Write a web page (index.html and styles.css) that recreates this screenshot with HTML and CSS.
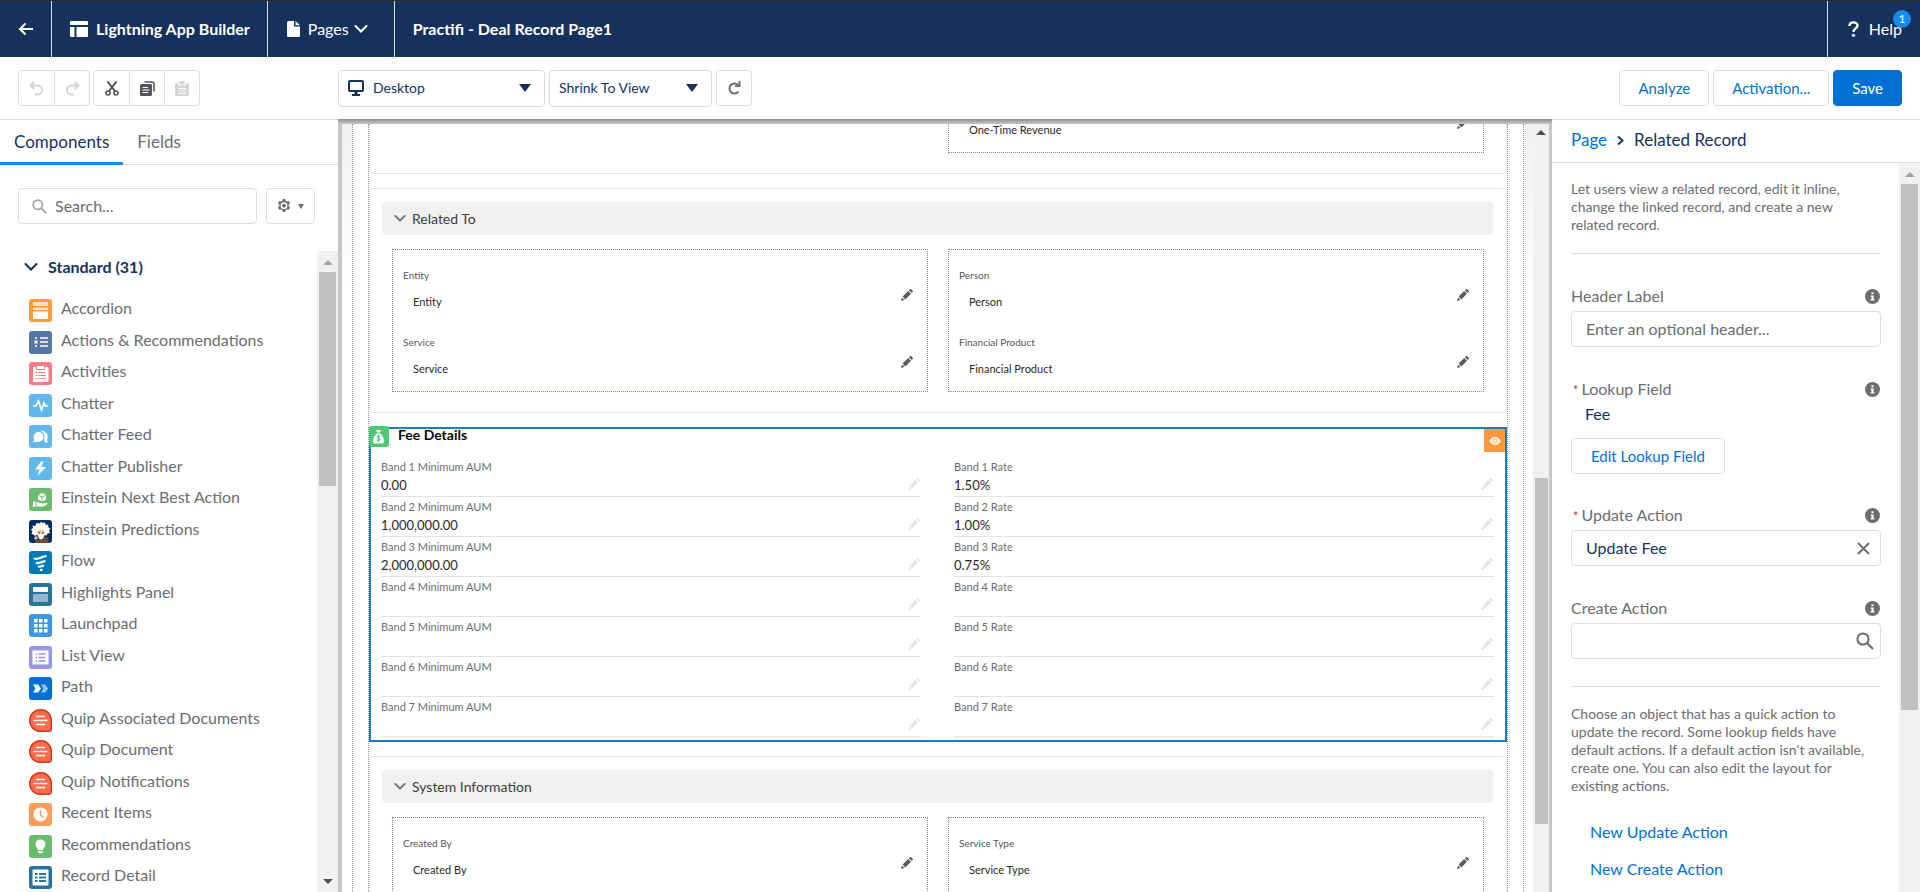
FILE: index.html
```html
<!DOCTYPE html>
<html lang="en">
<head>
  <meta charset="UTF-8">
  <title>Lightning App Builder</title>
  <meta name="viewport" content="width=device-width, initial-scale=1.0">
  <link rel="stylesheet" href="styles.css">
</head>
<body>
  <svg class="defs" aria-hidden="true">
    <symbol id="pencil" viewBox="0 0 12 12">
      <path d="M0 12l1-3.6L3.6 11zM1.6 7.6l5.6-5.6 2.8 2.8-5.6 5.6zM7.9 1.3L9 .3c.4-.4.9-.4 1.2 0l1.5 1.5c.4.4.4.8 0 1.2l-1 1.1z"/>
    </symbol>
    <symbol id="chevron" viewBox="0 0 14 8">
      <path d="M1.5 1L7 6.5 12.500 1" fill="none" stroke="currentColor" stroke-width="2" stroke-linecap="round"/>
    </symbol>
    <symbol id="search" viewBox="0 0 18 18">
      <circle cx="7" cy="7" r="5.600" fill="none" stroke="currentColor" stroke-width="2"/>
      <path d="M11 11l6 6" stroke="currentColor" stroke-width="2.200"/>
    </symbol>
    <symbol id="info" viewBox="0 0 14 14">
      <circle cx="7" cy="7" r="7"/>
      <path fill="#fff" d="M6 3h2v1.800H6zM5.300 6H8v3.500h.8v1.200H5.200V9.500H6V7.200h-.7z"/>
    </symbol>
    <symbol id="quip" viewBox="0 0 23 23">
      <path d="M11.500.7h.5A10.400 10.400 0 0 1 22.300 11v11.300H11.500a10.800 10.800 0 0 1 0-21.600z" fill="#ff6d4d" stroke="#c73e1f" stroke-width="1.400"/>
      <path d="M7 7.500h9M4.500 11.500h14M7 15.500h9" stroke="#fff" stroke-width="1.400"/>
    </symbol>
  </svg>

  <header class="navbar">
    <a class="nav-item nav-back" href="#" aria-label="Back">
      <svg width="16" height="14" viewBox="0 0 16 14"><path d="M7.500 1.500L2 7l5.500 5.500M2 7h13" fill="none" stroke="#fff" stroke-width="2"/></svg>
    </a>
    <div class="nav-item nav-app">
      <svg width="18" height="16" viewBox="0 0 18 16"><path fill="#fff" d="M1 0h16q1 0 1 1v3H0V1q0-1 1-1zM0 6h4.500v10H1q-1 0-1-1zM6.500 6H18v9q0 1-1 1H6.500z"/></svg>
      <span>Lightning App Builder</span>
    </div>
    <button class="nav-item nav-pages" type="button">
      <svg width="13" height="16" viewBox="0 0 13 16"><path fill="#fff" d="M1.500 0H7v5.500h6v9q0 1.500-1.500 1.500h-10Q0 16 0 14.500v-13Q0 0 1.500 0zM8.500 0L13 4.300H8.500z"/></svg>
      <span>Pages</span>
      <svg class="nav-chevron" width="14" height="8"><use href="#chevron"/></svg>
    </button>
    <h1 class="nav-title">Practifi - Deal Record Page1</h1>
    <button class="nav-item nav-help" type="button">
      <svg width="11" height="16" viewBox="0 0 11 16"><path d="M1.500 5c0-5 8-4.500 8-.5 0 3-4 2.800-4 6.500" fill="none" stroke="#fff" stroke-width="2.400"/><circle cx="5.500" cy="14.300" r="1.600" fill="#fff"/></svg>
      <span>Help</span>
      <span class="help-badge">1</span>
    </button>
  </header>

  <div class="toolbar">
    <div class="toolbar-left">
      <div class="button-group">
        <button type="button" aria-label="Undo" disabled><svg width="15" height="15" viewBox="0 0 15 15"><path d="M5 1L1.500 4.500 5 8M2 4.500h6.500a4.500 4.500 0 0 1 0 9H6" fill="none" stroke="currentColor" stroke-width="2"/></svg></button>
        <button type="button" aria-label="Redo" disabled><svg width="15" height="15" viewBox="0 0 15 15"><path d="M10 1l3.500 3.500L10 8M13 4.500H6.500a4.500 4.500 0 0 0 0 9H9" fill="none" stroke="currentColor" stroke-width="2"/></svg></button>
      </div>
      <div class="button-group">
        <button type="button" aria-label="Cut"><svg width="14" height="15" viewBox="0 0 14 15"><path d="M2.500.5L10 10M11.500.5L4 10" stroke="currentColor" stroke-width="2"/><circle cx="3" cy="12" r="2" fill="none" stroke="currentColor" stroke-width="1.600"/><circle cx="11" cy="12" r="2" fill="none" stroke="currentColor" stroke-width="1.600"/></svg></button>
        <button type="button" aria-label="Copy"><svg width="15" height="15" viewBox="0 0 15 15"><path d="M4.500 1h8Q14 1 14 2.500v8" fill="none" stroke="currentColor" stroke-width="1.600"/><rect y="3" width="12" height="12" rx="1.500" fill="currentColor"/><path d="M2.500 6.500H8M2.500 9h7M2.500 11.500H8" stroke="#fff"/></svg></button>
        <button type="button" aria-label="Paste" disabled><svg width="14" height="15" viewBox="0 0 14 15"><path fill="currentColor" d="M1 2h2v2.500h8V2h2q1 0 1 1v11q0 1-1 1H1q-1 0-1-1V3q0-1 1-1zM4.500 0h5v3.500h-5z"/><path d="M3 7.500h8M3 10h8M3 12.500h8" stroke="#fff"/></svg></button>
      </div>
    </div>
    <div class="toolbar-view">
      <div class="select select-device">
        <svg width="16" height="16" viewBox="0 0 16 16"><rect x="1" y="1" width="14" height="10" rx="1" fill="none" stroke="#16325c" stroke-width="2"/><path fill="#16325c" d="M6.500 12h3v2H12v2H4v-2h2.500z"/></svg>
        <select aria-label="Form factor"><option>Desktop</option></select>
      </div>
      <div class="select select-zoom">
        <select aria-label="Zoom"><option>Shrink To View</option></select>
      </div>
      <button class="button button-icon" type="button" aria-label="Refresh"><svg width="15" height="14" viewBox="0 0 15 14"><path d="M11.500 4.500A5 5 0 1 0 11.500 10.500" fill="none" stroke="currentColor" stroke-width="2"/><path fill="currentColor" d="M13.500 0v6H8V4.300h3.500V0z"/></svg></button>
    </div>
    <div class="toolbar-actions">
      <button class="button" type="button">Analyze</button>
      <button class="button" type="button">Activation...</button>
      <button class="button button-brand" type="button">Save</button>
    </div>
  </div>

  <main class="builder">
    <aside class="palette">
      <nav class="tabs">
        <a class="active" href="#">Components</a>
        <a href="#">Fields</a>
      </nav>
      <div class="palette-search">
        <div class="search-box">
          <svg width="15" height="15"><use href="#search" width="15" height="15"/></svg>
          <input type="search" placeholder="Search..." aria-label="Search components">
        </div>
        <button class="button button-gear" type="button" aria-label="Settings">
          <svg width="14" height="14" viewBox="0 0 14 14"><path fill="currentColor" fill-rule="evenodd" d="M5.700 0h2.600l.4 1.900 1.300.7 1.800-.7 1.300 2.300-1.400 1.400v1.600l1.400 1.300-1.300 2.300-1.800-.6-1.300.8-.4 2H5.700l-.4-2-1.300-.8-1.800.6L.9 8.500l1.400-1.300V5.600L.9 4.200l1.300-2.300 1.800.7 1.300-.7zM7 3.300a3.400 3.400 0 1 0 0 6.800 3.400 3.400 0 0 0 0-6.800z"/><circle cx="7" cy="6.700" r="1.900" fill="currentColor"/></svg>
          <span class="caret"></span>
        </button>
      </div>
      <div class="palette-body">
        <div class="palette-list">
          <h2><svg width="14" height="8"><use href="#chevron"/></svg>Standard (31)</h2>
          <ul>
            <li><svg class="tile orange" viewBox="0 0 23 23"><path fill="#ffdcba" d="M4 3h15v4H4zM4 8.500h15v2.500H4z"/><path fill="#fff" d="M4 12.500h15V20H4z"/></svg>Accordion</li>
            <li><svg class="tile slate" viewBox="0 0 23 23"><path d="M11 7h8M11 11h8M11 15h8M7 6v2M7 14v2" stroke="#fff" stroke-width="1.600"/><circle cx="7" cy="11" r="1.800" fill="#fff"/></svg>Actions &amp; Recommendations</li>
            <li><svg class="tile pink" viewBox="0 0 23 23"><path fill="#fff" d="M8 4h7v3H8zM5 5h2v3h9V5h2q1.500 0 1.500 1.500v12Q19.500 20 18 20H5.500Q4 20 4 18.500v-12Q4 5 5 5z"/><path d="M6.500 10.500h2M9.500 10.500h7M6.500 13.500h2M9.500 13.500h7M6.500 16.500h2M9.500 16.500h7" stroke="#f67c8c" stroke-width="1.200"/></svg>Activities</li>
            <li><svg class="tile sky" viewBox="0 0 23 23"><path d="M4 12h3l2.500-5 3 9 2.500-7 1.500 3H19" fill="none" stroke="#fff" stroke-width="1.700"/></svg>Chatter</li>
            <li><svg class="tile sky" viewBox="0 0 23 23"><path fill="#fff" d="M12 5.500a6.500 6.500 0 0 1 6 9.500l.8 3-3-.8z"/><circle cx="9.700" cy="12" r="6" fill="#62b7ed"/><circle cx="9.500" cy="12" r="5" fill="#fff"/><path fill="#fff" d="M4.300 17.500l1-4 3 3z"/></svg>Chatter Feed</li>
            <li><svg class="tile sky" viewBox="0 0 23 23"><path fill="#fff" d="M12.500 4L6 12.500h4.500L8.500 19 17 10h-5l2.500-5z"/></svg>Chatter Publisher</li>
            <li><svg class="tile green" viewBox="0 0 23 23"><path fill="#fff" d="M13 5l4 2v4.500l-4 2-4-2V7zM4 13.500h2.500V19H4zM7.500 14l6 1.500 4.500-.5c1 1-1.500 3-5 3.500H7.500z"/><path d="M9.500 7.500L13 9l3.500-1.500M13 9v4" stroke="#6bbd6e" fill="none"/></svg>Einstein Next Best Action</li>
            <li><svg class="tile navy" viewBox="0 0 23 23"><path fill="#6b4a3a" d="M9 23q0-5 4-6 5-1 6.500 2v4z"/><path fill="#fff" d="M9.500 3l1.500.5 1-2 1.500 1.500 2.500-.5.5 2 3 .5-.5 2 2.500 1.500-1.500 2 1 2.500-2.500.5-1 2-2.500-.5H7.500L6 16l-1.500-1.500L2.500 14l1-2.500L2 9.500l2-1.500L3.500 5.500l3 .5.5-2.500z"/><path fill="#f6c9a0" d="M8 11q4-2.500 8 0l-.5 4-3.500 3.500L8.500 15z"/><path fill="#fff" d="M8.500 15q3.500-2 7 0-1 4-3.500 4.500-2.500-.5-3.500-4.500z"/><circle cx="10.200" cy="12.800" r=".7" fill="#222"/><circle cx="13.800" cy="12.800" r=".7" fill="#222"/><circle cx="7" cy="18" r="1.700" fill="#f6c9a0"/><path fill="#6b4a3a" d="M6 19.500h2.500l1 3.500H6z"/></svg>Einstein Predictions</li>
            <li><svg class="tile blue" viewBox="0 0 23 23"><path d="M5 7q1.500 1.500 4.500.5t4-1.500 4-1M7 11.500q1.500 1 3.500.3t3-1 3-.6M9 15.200q1 .8 2.500.3t3.500-.8M11 18.800q1 .5 2.500-.3" fill="none" stroke="#fff" stroke-width="2.200"/></svg>Flow</li>
            <li><svg class="tile teal" viewBox="0 0 23 23"><rect x="4" y="4" width="15" height="5" fill="#fff"/><rect x="4" y="11" width="15" height="8" fill="#95b8cf"/></svg>Highlights Panel</li>
            <li><svg class="tile azure" viewBox="0 0 23 23"><path fill="#fff" d="M5 5h3.500v3.500H5zM10 5h3.500v3.500H10zM15 5h3.500v3.500H15zM5 10h3.500v3.500H5zM10 10h3.500v3.500H10zM15 10h3.500v3.500H15zM5 15h3.500v3.500H5zM10 15h3.500v3.500H10zM15 15h3.500v3.500H15z"/></svg>Launchpad</li>
            <li><svg class="tile violet" viewBox="0 0 23 23"><rect x="3.500" y="4.500" width="16" height="14" fill="#fff"/><path d="M6.500 8h1.500M9.500 8h7M6.500 11.500H8M9.500 11.500h7M6.500 15H8M9.500 15h7" stroke="#9895ee" stroke-width="1.400"/></svg>List View</li>
            <li><svg class="tile cobalt" viewBox="0 0 23 23"><path fill="#fff" d="M4 7.500h5l3 4-3 4H4l2.500-4z"/><path fill="#99c6ef" d="M12 7.500h4l3 4-3 4h-4l2.500-4z"/></svg>Path</li>
            <li><svg class="tile"><use href="#quip"/></svg>Quip Associated Documents</li>
            <li><svg class="tile"><use href="#quip"/></svg>Quip Document</li>
            <li><svg class="tile"><use href="#quip"/></svg>Quip Notifications</li>
            <li><svg class="tile peach" viewBox="0 0 23 23"><circle cx="11.500" cy="11.500" r="7" fill="#fff"/><path d="M11.500 7v5l2.500 2.500" fill="none" stroke="#ff9e5a" stroke-width="1.600"/></svg>Recent Items</li>
            <li><svg class="tile green" viewBox="0 0 23 23"><path fill="#fff" d="M11.500 4.500a5 5 0 0 1 5 5c0 2.500-2.200 3.300-2.500 5.500H9c-.3-2.200-2.500-3-2.500-5.500a5 5 0 0 1 5-5zM9 16h5v1q-2.500 3-5 0z"/></svg>Recommendations</li>
            <li><svg class="tile teal" viewBox="0 0 23 23"><rect x="3.500" y="3.500" width="16" height="16" rx="1" fill="#fff"/><path d="M6 8h2.500M10 8h7M6 11.500h2.500M10 11.500h7M6 15h2.500M10 15h7" stroke="#2a739e" stroke-width="2"/></svg>Record Detail</li>
          </ul>
        </div>
        <div class="scrollbar"><i class="up"></i><span class="thumb"></span><i class="down"></i></div>
      </div>
    </aside>

    <section class="canvas">
      <div class="canvas-page">
        <div class="region-outer">
          <div class="region">
            <article class="card card-partial">
              <div class="columns">
                <div class="column">
                  <div class="field"><div class="field-value">One-Time Revenue</div><svg><use href="#pencil"/></svg></div>
                </div>
              </div>
            </article>

            <article class="card">
              <h3 class="section-title"><svg width="12" height="7"><use href="#chevron"/></svg>Related To</h3>
              <div class="columns">
                <div class="column">
                  <div class="field"><div><div class="field-label">Entity</div><div class="field-value">Entity</div></div><svg><use href="#pencil"/></svg></div>
                  <div class="field"><div><div class="field-label">Service</div><div class="field-value">Service</div></div><svg><use href="#pencil"/></svg></div>
                </div>
                <div class="column">
                  <div class="field"><div><div class="field-label">Person</div><div class="field-value">Person</div></div><svg><use href="#pencil"/></svg></div>
                  <div class="field"><div><div class="field-label">Financial Product</div><div class="field-value">Financial Product</div></div><svg><use href="#pencil"/></svg></div>
                </div>
              </div>
            </article>

            <article class="fee">
              <svg class="fee-icon" width="20" height="21" viewBox="0 0 20 21"><rect width="20" height="21" rx="3" fill="#4bca73"/><path fill="#fff" d="M7 4h5l-1 2.500H8zM7.500 7.500h4q3.500 3.500 3.500 7 0 3-2 3H6q-2 0-2-3 0-3.500 3.500-7z"/><path d="M11.300 10.500q-3.500-1-3.500.8t3.500 1.800q0 2-3.600 1M9.500 9v7" fill="none" stroke="#4bca73"/></svg>
              <span class="visibility"><svg width="12" height="8" viewBox="0 0 14 10"><path fill="#fff" d="M0 5q3-5 7-5t7 5q-3 5-7 5T0 5z"/><circle cx="7" cy="5" r="2.600" fill="none" stroke="#ff9a3c" stroke-width="1.200"/></svg></span>
              <h3>Fee Details</h3>
              <dl>
                <div><dt>Band 1 Minimum AUM</dt><dd>0.00</dd><svg><use href="#pencil"/></svg></div>
                <div><dt>Band 1 Rate</dt><dd>1.50%</dd><svg><use href="#pencil"/></svg></div>
                <div><dt>Band 2 Minimum AUM</dt><dd>1,000,000.00</dd><svg><use href="#pencil"/></svg></div>
                <div><dt>Band 2 Rate</dt><dd>1.00%</dd><svg><use href="#pencil"/></svg></div>
                <div><dt>Band 3 Minimum AUM</dt><dd>2,000,000.00</dd><svg><use href="#pencil"/></svg></div>
                <div><dt>Band 3 Rate</dt><dd>0.75%</dd><svg><use href="#pencil"/></svg></div>
                <div><dt>Band 4 Minimum AUM</dt><dd></dd><svg><use href="#pencil"/></svg></div>
                <div><dt>Band 4 Rate</dt><dd></dd><svg><use href="#pencil"/></svg></div>
                <div><dt>Band 5 Minimum AUM</dt><dd></dd><svg><use href="#pencil"/></svg></div>
                <div><dt>Band 5 Rate</dt><dd></dd><svg><use href="#pencil"/></svg></div>
                <div><dt>Band 6 Minimum AUM</dt><dd></dd><svg><use href="#pencil"/></svg></div>
                <div><dt>Band 6 Rate</dt><dd></dd><svg><use href="#pencil"/></svg></div>
                <div><dt>Band 7 Minimum AUM</dt><dd></dd><svg><use href="#pencil"/></svg></div>
                <div><dt>Band 7 Rate</dt><dd></dd><svg><use href="#pencil"/></svg></div>
              </dl>
            </article>

            <article class="card">
              <h3 class="section-title"><svg width="12" height="7"><use href="#chevron"/></svg>System Information</h3>
              <div class="columns">
                <div class="column">
                  <div class="field"><div><div class="field-label">Created By</div><div class="field-value">Created By</div></div><svg><use href="#pencil"/></svg></div>
                </div>
                <div class="column">
                  <div class="field"><div><div class="field-label">Service Type</div><div class="field-value">Service Type</div></div><svg><use href="#pencil"/></svg></div>
                </div>
              </div>
            </article>
          </div>
        </div>
      </div>
      <div class="scrollbar scrollbar-canvas"><i class="up dark"></i><span class="thumb"></span></div>
    </section>

    <aside class="properties">
      <nav class="breadcrumb"><a href="#">Page</a><svg width="7" height="11" viewBox="0 0 7 11"><path d="M1 1.500l4.500 4L1 9.500" fill="none" stroke="#16325c" stroke-width="2"/></svg><span>Related Record</span></nav>
      <div class="properties-body">
        <form class="properties-form">
          <p>Let users view a related record, edit it inline, change the linked record, and create a new related record.</p>
          <hr>
          <div class="form-label"><label for="header-label">Header Label</label><svg><use href="#info"/></svg></div>
          <div class="input"><input id="header-label" type="text" placeholder="Enter an optional header..."></div>
          <div class="form-label"><span><b>*</b>Lookup Field</span><svg><use href="#info"/></svg></div>
          <div class="lookup-value">Fee</div>
          <button class="button button-lookup" type="button">Edit Lookup Field</button>
          <div class="form-label"><label for="update-action"><b>*</b>Update Action</label><svg><use href="#info"/></svg></div>
          <div class="input"><input id="update-action" type="text" value="Update Fee"><svg width="13" height="13" viewBox="0 0 13 13"><path d="M1 1l11 11M12 1L1 12" stroke="currentColor" stroke-width="2"/></svg></div>
          <div class="form-label"><label for="create-action">Create Action</label><svg><use href="#info"/></svg></div>
          <div class="input input-search"><input id="create-action" type="text"><svg width="18" height="18"><use href="#search"/></svg></div>
          <hr>
          <p>Choose an object that has a quick action to update the record. Some lookup fields have default actions. If a default action isn't available, create one. You can also edit the layout for existing actions.</p>
          <div class="form-links">
            <a href="#">New Update Action</a>
            <a href="#">New Create Action</a>
          </div>
        </form>
        <div class="scrollbar scrollbar-properties"><i class="up"></i><span class="thumb"></span></div>
      </div>
    </aside>
  </main>
</body>
</html>
```

FILE: styles.css
```css
* {
  box-sizing: border-box;
}

body {
  margin: 0;
  height: 100vh;
  display: flex;
  flex-direction: column;
  overflow: hidden;
  background: #fff;
  color: #16325c;
  font-family: Lato, "Open Sans", sans-serif;
  font-size: 16px;
  line-height: 20px;
}

h1, h2, h3, p, ul, dl, dd {
  margin: 0;
  padding: 0;
}

button, input, select {
  font: inherit;
  color: inherit;
}

a {
  color: #0070d2;
  text-decoration: none;
}

svg {
  flex: none;
}

.defs {
  position: absolute;
  width: 0;
  height: 0;
}

/* navbar */
.navbar {
  display: flex;
  flex: none;
  height: 57px;
  border-top: 1px solid #2b2826;
  background: #16325c;
  color: #fff;
}

.nav-item {
  display: flex;
  align-items: center;
  border: 0;
  border-right: 1px solid #d8dde6;
  background: none;
  padding: 0 17px 0 18px;
  gap: 8px;
}

.nav-app {
  font-weight: bold;
}

.nav-pages {
  padding: 0 26px 0 19px;
}

.nav-chevron {
  margin-left: -3px;
}

.nav-title {
  flex: 1;
  padding-left: 18px;
  font-size: 16px;
  line-height: 56px;
}

.nav-help {
  position: relative;
  border-right: 0;
  border-left: 1px solid #d8dde6;
  padding: 0 18px 0 20px;
  gap: 10px;
}

.help-badge {
  position: absolute;
  top: 9px;
  right: 9px;
  width: 18px;
  height: 18px;
  border-radius: 50%;
  background: #1589ee;
  font-size: 12px;
  line-height: 18px;
}

/* toolbar */
.toolbar {
  display: grid;
  grid-template-columns: 320px 1fr auto;
  align-items: center;
  flex: none;
  height: 63px;
  padding: 0 18px;
  border-bottom: 1px solid #d8dde6;
}

.toolbar-left, .toolbar-view, .toolbar-actions {
  display: flex;
  gap: 4px;
}

.toolbar-left {
  gap: 3px;
}

.button-group {
  display: flex;
  border: 1px solid #d8dde6;
  border-radius: 4px;
}

.button-group button {
  display: flex;
  align-items: center;
  justify-content: center;
  width: 35px;
  height: 34px;
  border: 0;
  background: none;
  padding: 0;
  color: #54565a;
}

.button-group button + button {
  border-left: 1px solid #d8dde6;
}

.button-group button:disabled {
  color: #d4d4d4;
}

.button {
  height: 36px;
  padding: 0 18px;
  border: 1px solid #d8dde6;
  border-radius: 4px;
  background: #fff;
  font-size: 15px;
  color: #0070d2;
}

.button-brand {
  border-color: #0070d2;
  background: #0070d2;
  color: #fff;
}

.button-icon {
  display: flex;
  align-items: center;
  justify-content: center;
  width: 36px;
  padding: 0;
  color: #6b6d70;
}

.select {
  position: relative;
  display: flex;
  align-items: center;
  height: 37px;
  border: 1px solid #dddbda;
  border-radius: 4px;
}

.select::after {
  content: "";
  position: absolute;
  right: 13px;
  border: 6px solid transparent;
  border-top: 8px solid #16325c;
  border-bottom: 0;
  pointer-events: none;
}

.select select {
  appearance: none;
  width: 100%;
  height: 35px;
  border: 0;
  background: none;
  padding: 0 9px;
  font-size: 14px;
}

.select-device {
  width: 207px;
  padding-left: 9px;
}

.select-zoom {
  width: 163px;
}

/* layout */
.builder {
  display: grid;
  grid-template-columns: 338px 1fr 368px;
  flex: 1;
  min-height: 0;
}

.palette, .properties {
  display: flex;
  flex-direction: column;
  min-height: 0;
}

.tabs {
  display: flex;
  height: 45px;
  border-bottom: 1px solid #d8dde6;
}

.tabs a {
  height: 45px;
  padding: 0 14px;
  font-size: 17px;
  line-height: 44px;
  color: #6b6d70;
}

.tabs .active {
  border-bottom: 3px solid #1589ee;
  color: #16325c;
}

.palette-search {
  display: flex;
  gap: 9px;
  padding: 23px 23px 27px 18px;
}

.search-box {
  display: flex;
  flex: 1;
  align-items: center;
  gap: 8px;
  height: 36px;
  padding-left: 13px;
  border: 1px solid #d8dde6;
  border-radius: 4px;
  color: #a0a2a5;
}

.search-box input {
  width: 100%;
  border: 0;
  padding: 0;
  outline: 0;
}

::placeholder {
  color: #6b6d70;
  opacity: 1;
}

.button-gear {
  display: flex;
  align-items: center;
  gap: 7px;
  width: 49px;
  padding: 0 10px;
  color: #6b6d70;
}

.caret {
  border: 3px solid transparent;
  border-top: 5px solid #6b6d70;
  border-bottom: 0;
}

.palette-body, .properties-body {
  display: flex;
  flex: 1;
  min-height: 0;
}

.palette-list {
  flex: 1;
  overflow: hidden;
}

.palette-list h2 {
  display: flex;
  align-items: center;
  gap: 10px;
  height: 32px;
  margin-bottom: 12px;
  padding-left: 24px;
  font-size: 16px;
}

.palette-list ul {
  list-style: none;
}

.palette-list li {
  display: flex;
  gap: 9px;
  height: 31px;
  padding-left: 29px;
  line-height: 25px;
  color: #6b6d70;
}

.palette-list li:nth-child(odd) {
  height: 32px;
}

.tile {
  width: 23px;
  height: 23px;
  margin-top: 4px;
  border-radius: 3px;
}

.orange { background: #ff9a3c; }
.slate { background: #5876a3; }
.pink { background: #f67c8c; }
.sky { background: #62b7ed; }
.green { background: #6bbd6e; }
.navy { background: #032e61; }
.blue { background: #0079bc; }
.teal { background: #2a739e; }
.azure { background: #3c97dd; }
.violet { background: #9895ee; }
.cobalt { background: #0070d2; }
.peach { background: #ff9e5a; }

/* scrollbars */
.scrollbar {
  display: flex;
  flex-direction: column;
  align-items: center;
  flex: none;
  width: 21px;
  padding-top: 9px;
  background: #f1f1f1;
}

.scrollbar i {
  border: 5px solid transparent;
}

.scrollbar .up {
  border-top: 0;
  border-bottom-color: #a3a3a3;
}

.scrollbar .dark {
  border-bottom-color: #505050;
}

.scrollbar .down {
  margin: auto 0 8px;
  border-bottom: 0;
  border-top-color: #505050;
}

.thumb {
  width: 17px;
  height: 214px;
  margin-top: 7px;
  background: #c1c1c1;
}

.scrollbar-canvas {
  width: 16px;
  padding-top: 6px;
}

.scrollbar-canvas .thumb {
  width: 13px;
  height: 346px;
  margin-top: 343px;
}

.scrollbar-properties .thumb {
  height: 526px;
}

/* canvas */
.canvas {
  display: flex;
  min-width: 0;
  min-height: 0;
  margin-top: -1px;
  padding: 5px 3px 0 4px;
  background: linear-gradient(#8c8e91, #c6c7ca 5px);
}

.canvas-page {
  flex: 1;
  overflow: hidden;
  padding: 0 9px 0 10px;
  background: linear-gradient(#f0f0f0, #fff 170px);
}

.region-outer {
  min-height: 100%;
  padding: 0 15px;
  border: dotted #8a97b0;
  border-width: 0 1px;
  background: #fff;
}

.region {
  display: flex;
  flex-direction: column;
  gap: 14px;
  border: dotted #8a97b0;
  border-width: 0 1px;
}

.card {
  padding: 13px 13px 20px 12px;
  border: 1px solid #e5e5e5;
  border-radius: 4px;
}

.card-partial {
  margin-top: -39px;
}

.card-partial .column {
  grid-column: 2;
}

.section-title {
  display: flex;
  align-items: center;
  gap: 6px;
  height: 33px;
  margin-bottom: 14px;
  padding-left: 12px;
  border-radius: 4px;
  background: #f1f1f1;
  font-size: 14px;
  font-weight: normal;
  color: #3e3e3c;
}

.section-title svg {
  color: #6b6d70;
}

.columns {
  display: grid;
  grid-template-columns: 1fr 1fr;
  gap: 20px;
  margin: 0 9px 0 10px;
}

.column {
  display: flex;
  flex-direction: column;
  gap: 22px;
  padding: 17px 14px 12px 10px;
  border: 1px dotted #7688a8;
}

.field {
  display: flex;
  align-items: flex-end;
  justify-content: space-between;
}

.field svg {
  width: 12px;
  height: 12px;
  margin-bottom: 11px;
  fill: #5c5c5a;
}

.field-label {
  margin-bottom: 9px;
  font-size: 10px;
  line-height: 16px;
  color: #54565a;
}

.field-value {
  padding-left: 10px;
  font-size: 11px;
  color: #2b2826;
}

.fee {
  position: relative;
  padding: 0 11px 3px 10px;
  border: 2px solid #1c7cbd;
}

.fee h3 {
  height: 28px;
  padding-left: 17px;
  font-size: 14px;
  line-height: 12px;
  color: #080707;
}

.fee-icon {
  position: absolute;
  top: -3px;
  left: -2px;
}

.visibility {
  position: absolute;
  top: 0;
  right: 0;
  display: flex;
  align-items: center;
  justify-content: center;
  width: 21px;
  height: 23px;
  background: #ff9a3c;
}

.fee dl {
  display: grid;
  grid-template-columns: 1fr 1fr;
  column-gap: 33px;
}

.fee dl div {
  position: relative;
  height: 40px;
  padding-top: 3px;
  border-bottom: 1px solid #e2e2e2;
}

.fee dt {
  font-size: 11px;
  line-height: 14px;
  color: #6b6d70;
}

.fee dd {
  margin-top: 2px;
  font-size: 13px;
  line-height: 18px;
  color: #2b2826;
}

.fee dl svg {
  position: absolute;
  right: 1px;
  bottom: 6px;
  width: 12px;
  height: 12px;
  fill: #e5e4e3;
}

/* properties */
.breadcrumb {
  display: flex;
  align-items: center;
  flex: none;
  gap: 10px;
  height: 43px;
  padding: 0 0 2px 19px;
  border-bottom: 1px solid #d8dde6;
  font-size: 17px;
}

.properties-form {
  flex: 1;
  padding: 17px 18px 0 19px;
  overflow: hidden;
  color: #6b6d70;
}

.properties-form p {
  padding-right: 6px;
  font-size: 14px;
  line-height: 18px;
}

.properties-form hr {
  margin: 19px 0 32px;
  border: 0;
  border-top: 1px solid #d8dde6;
}

.form-label {
  display: flex;
  align-items: center;
  justify-content: space-between;
  height: 20px;
  margin-bottom: 5px;
}

.form-label svg {
  width: 15px;
  height: 15px;
  margin-right: 1px;
  fill: #6b6d70;
}

.form-label b {
  padding: 0 3px 0 2px;
  font-size: 13px;
  font-weight: normal;
  color: #c23934;
}

.input {
  display: flex;
  align-items: center;
  height: 36px;
  margin-bottom: 32px;
  padding: 0 10px 0 14px;
  border: 1px solid #d8dde6;
  border-radius: 4px;
}

.input input {
  flex: 1;
  min-width: 0;
  border: 0;
  padding: 0;
  outline: 0;
  color: #16325c;
}

.input-search {
  padding-right: 6px;
  margin-bottom: 27px;
}

.input-search + hr {
  margin: 0 0 18px;
}

.lookup-value {
  padding: 0 0 14px 14px;
  color: #16325c;
}

.button-lookup {
  margin-bottom: 31px;
  padding: 0 19px;
}

.form-links {
  display: flex;
  flex-direction: column;
  gap: 17px;
  padding: 27px 0 0 19px;
}
```
